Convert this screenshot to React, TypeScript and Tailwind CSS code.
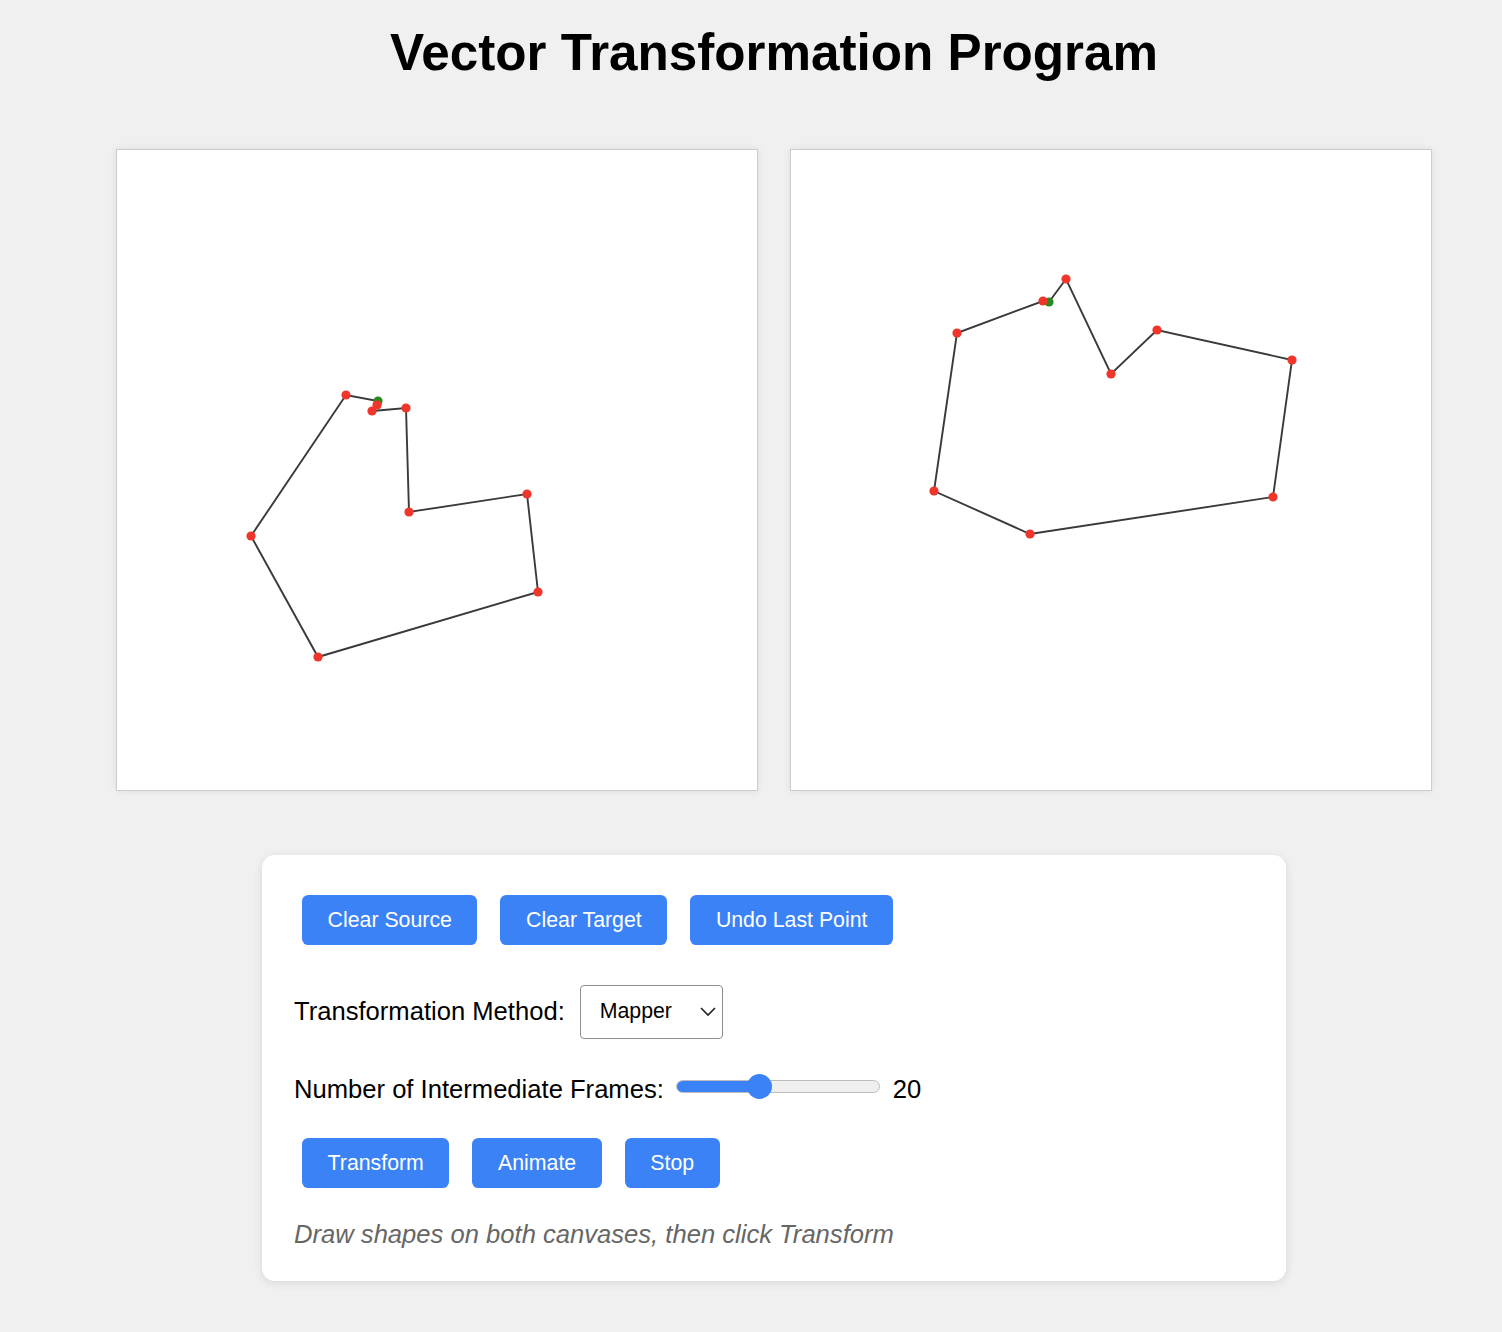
import React from "react";

type P = [number, number];

const leftPts: P[] = [
  [261, 251],
  [260, 255],
  [255, 261],
  [289, 258],
  [292, 362],
  [410, 344],
  [421, 442],
  [201, 507],
  [134, 386],
  [229, 245],
];

const rightPts: P[] = [
  [258, 152],
  [275, 129],
  [320, 224],
  [366, 180],
  [501, 210],
  [482, 347],
  [239, 384],
  [143, 341],
  [166, 183],
  [252, 151],
];

function Shape({ pts }: { pts: P[] }) {
  const d = pts.map((p) => p.join(",")).join(" ");
  return (
    <svg width="640" height="640" viewBox="0 0 640 640" className="block">
      <polygon points={d} fill="none" stroke="#3a3a3a" strokeWidth="1.9" />
      <circle cx={pts[0][0]} cy={pts[0][1]} r="4.6" fill="#2a8a22" />
      {pts.slice(1).map((p, i) => (
        <circle key={i} cx={p[0]} cy={p[1]} r="4.6" fill="#f0352a" />
      ))}
    </svg>
  );
}

function Btn({ children }: { children: React.ReactNode }) {
  return (
    <button className="h-[50px] px-[25.6px] bg-[#3b82f6] text-white text-[21.3px] leading-[24px] rounded-[6.4px] cursor-pointer">
      {children}
    </button>
  );
}

export default function App() {
  return (
    <div
      className="min-h-screen bg-[#f0f0f0] pl-[46px] text-black"
      style={{ fontFamily: '"Liberation Sans", Arial, Helvetica, sans-serif' }}
    >
      <h1 className="pt-[23px] text-center text-[51.2px] font-bold leading-[59px]">
        Vector Transformation Program
      </h1>
      <div className="mt-[67px] flex justify-center gap-[32px]">
        <div className="bg-white border border-[#cccccc] shadow-[0_0_8px_rgba(0,0,0,0.08)]">
          <Shape pts={leftPts} />
        </div>
        <div className="bg-white border border-[#cccccc] shadow-[0_0_8px_rgba(0,0,0,0.08)]">
          <Shape pts={rightPts} />
        </div>
      </div>
      <div className="mt-[64px] flex justify-center">
        <div className="w-[1024px] bg-white rounded-[12.8px] shadow-[0_2px_10px_rgba(0,0,0,0.1)] p-[32px] flex flex-col">
          <div className="flex gap-[23px] px-[8px] py-[8px]">
            <Btn>Clear Source</Btn>
            <Btn>Clear Target</Btn>
            <Btn>Undo Last Point</Btn>
          </div>
          <div className="mt-[32px] flex items-center h-[54px]">
            <span className="text-[25.6px] leading-[30px] -translate-y-[1px]">Transformation Method:</span>
            <div className="relative ml-[15px] w-[143px] h-[54px]">
              <select
                defaultValue="Mapper"
                className="appearance-none w-full h-full border-[1.6px] border-[#8f8f8f] rounded-[4px] bg-white pl-[19px] text-[21.3px] text-black outline-none"
                style={{ fontFamily: '"Liberation Sans", Arial, sans-serif' }}
              >
                <option>Mapper</option>
                <option>Linear</option>
              </select>
              <svg
                className="absolute right-[7px] top-[20px] pointer-events-none"
                width="16"
                height="12"
                viewBox="0 0 16 12"
              >
                <polyline points="1,3 8,10 15,3" fill="none" stroke="#222" strokeWidth="1.6" />
              </svg>
            </div>
          </div>
          <div className="mt-[35px] flex items-center h-[30px]">
            <span className="text-[25.6px] leading-[30px]">Number of Intermediate Frames:</span>
            <div className="relative ml-[12px] mb-[5px] w-[204px] h-[25px] flex items-center">
              <div className="w-full h-[13px] rounded-full bg-[#efefef] border border-[#bdbdbd] overflow-hidden">
                <div className="h-full w-[83px] bg-[#3b82f6]" />
              </div>
              <div className="absolute left-[71px] top-[0px] w-[25px] h-[25px] rounded-full bg-[#3b82f6]" />
            </div>
            <span className="ml-[13px] text-[25.6px] leading-[30px]">20</span>
          </div>
          <div className="mt-[26px] flex gap-[23px] px-[8px] py-[8px]">
            <Btn>Transform</Btn>
            <Btn>Animate</Btn>
            <Btn>Stop</Btn>
          </div>
          <p className="mt-[23px] text-[25.6px] leading-[30px] italic text-[#666666]">
            Draw shapes on both canvases, then click Transform
          </p>
        </div>
      </div>
      <div className="h-[51px]" />
    </div>
  );
}
